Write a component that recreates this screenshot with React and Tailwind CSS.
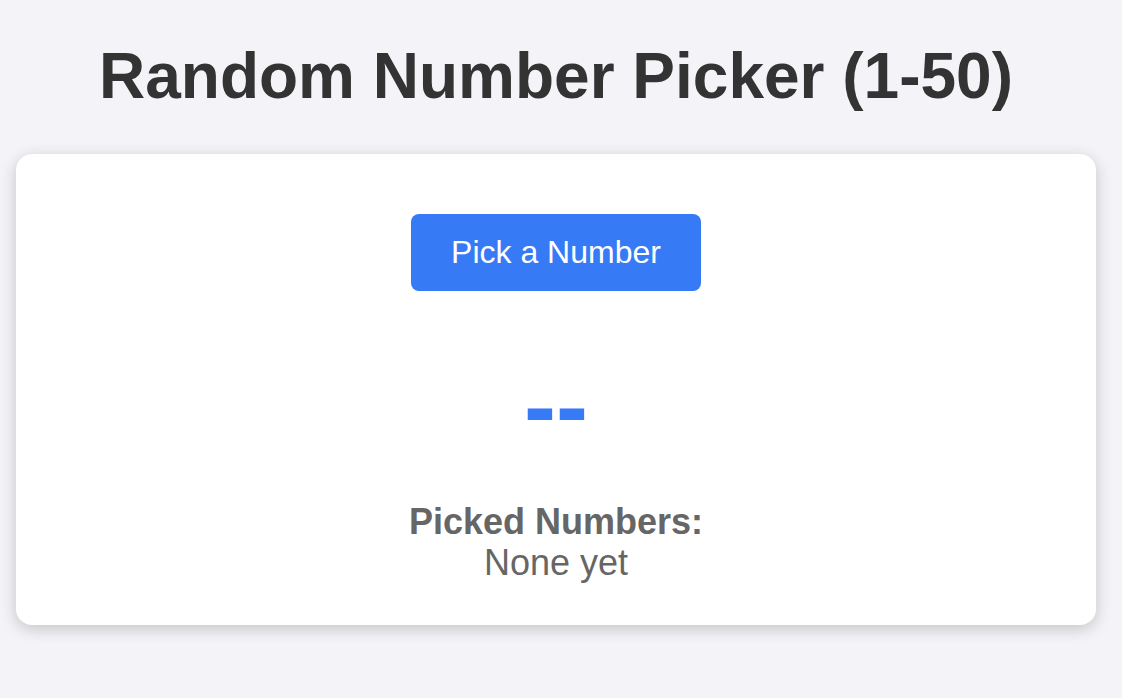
import React, { useState } from 'react';

function App() {
  const [current, setCurrent] = useState(null);
  const [picked, setPicked] = useState([]);

  const handlePick = () => {
    const left = [];
    for (let i = 1; i <= 50; i++) {
      if (!picked.includes(i)) left.push(i);
    }
    if (left.length === 0) return;
    const n = left[Math.floor(Math.random() * left.length)];
    setCurrent(n);
    setPicked((prev) => [...prev, n]);
  };

  return (
    <div
      className="min-h-screen bg-[#f4f4f8] pt-[39px] pb-10"
      style={{ fontFamily: '"Liberation Sans", Arial, sans-serif' }}
    >
      <div className="ml-[16px] w-[1080px]">
        <h1 className="text-center text-[64px] leading-[74px] font-bold text-[#333]">
          Random Number Picker (1-50)
        </h1>

        <div className="mt-[41px] bg-white rounded-2xl shadow-[0_4px_16px_rgba(0,0,0,0.2)] pt-[60px] pb-[42px] flex flex-col items-center">
          <button
            type="button"
            onClick={handlePick}
            className="bg-[#377af5] text-white text-[32px] leading-[37px] px-10 py-5 rounded-lg"
          >
            Pick a Number
          </button>

          <div className="mt-[60px] text-[96px] leading-[110px] font-bold text-[#377af5]">
            {current === null ? '--' : current}
          </div>

          <div className="mt-[40px] text-center text-[36px] text-[#666]">
            <div className="font-bold leading-[41px]">Picked Numbers:</div>
            <div className="leading-[41px]">
              {picked.length ? picked.join(', ') : 'None yet'}
            </div>
          </div>
        </div>
      </div>
    </div>
  );
}

export default App;
